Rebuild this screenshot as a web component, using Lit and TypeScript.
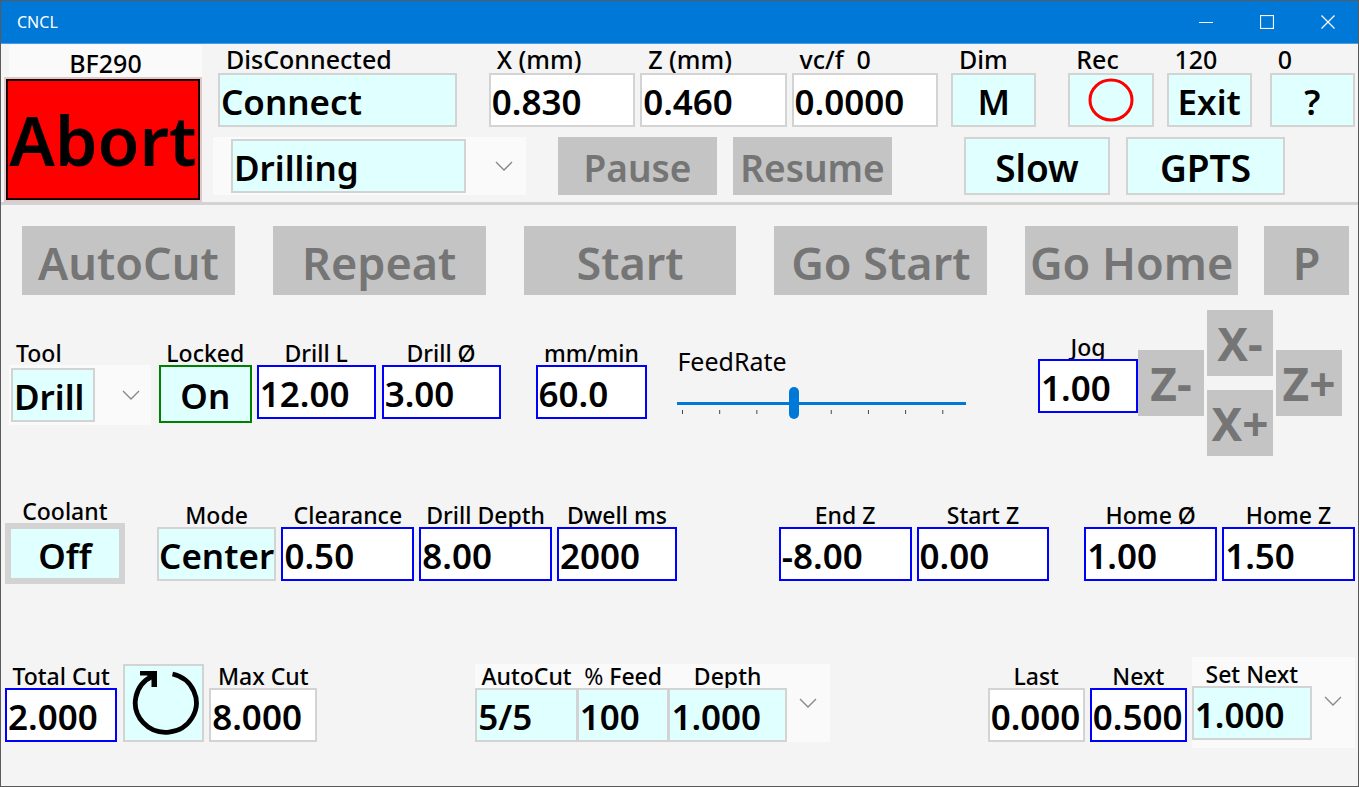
import { LitElement, html, css, nothing } from "lit";
import { customElement, property, state } from "lit/decorators.js";

const chevron = html`<svg class="chevron" viewBox="0 0 18 10" width="18" height="10" aria-hidden="true">
  <path d="M1 1 L9 9 L17 1" fill="none" stroke="#868686" stroke-width="1.3" />
</svg>`;

@customElement("app-root")
export class AppRoot extends LitElement {
  @property({ type: Number }) feedRate = 60;
  @state() private recording = false;

  static styles = css`
    :host {
      display: block;
      font-family: "Noto Sans", "Open Sans", sans-serif;
      font-weight: 500;
      color: #000;
    }
    * {
      box-sizing: border-box;
    }
    .window {
      min-height: 100vh;
      border: 1px solid #5a5a5a;
      background: #f4f4f4;
      display: flex;
      flex-direction: column;
    }
    .titlebar {
      height: 43px;
      background: #0078d7;
      border-bottom: 1px solid #4c9be0;
      color: #fff;
      display: flex;
      align-items: center;
      justify-content: space-between;
      padding-left: 16px;
    }
    .title {
      margin: 0;
      font-size: 16px;
      font-weight: 400;
    }
    .caption {
      display: flex;
    }
    .caption button {
      width: 61px;
      height: 42px;
      padding: 0;
      border: 0;
      background: none;
      display: grid;
      place-items: center;
    }

    button,
    input,
    select {
      font: inherit;
      color: inherit;
      margin: 0;
      border-radius: 0;
    }
    .box {
      display: block;
      position: relative;
      width: 100%;
      height: 54px;
      padding: 3px 1px 0;
      border: 2px solid #d3d3d3;
      background: #fff;
      font-size: 35px;
      font-weight: 600;
      text-align: left;
      appearance: none;
      outline: none;
      overflow: hidden;
      white-space: nowrap;
    }
    button.box {
      background: #e0ffff;
      text-align: center;
      padding: 0;
      line-height: 54px;
    }
    button.start {
      text-align: left;
      padding: 0 1px;
    }
    button.rec {
      line-height: 0;
    }
    .cyan {
      background: #e0ffff;
    }
    .blue {
      border-color: #0000ff;
    }
    .green {
      border-color: #008000;
      height: 58px;
    }
    button.green {
      line-height: 58px;
    }
    .thick {
      border-width: 6px;
      height: 61px;
    }
    .round {
      height: 78px;
      display: grid;
      place-items: center;
    }
    button.dead {
      display: block;
      width: 100%;
      border: 0;
      padding: 0;
      background: #c4c4c4;
      color: #757575;
      font-weight: 600;
      white-space: nowrap;
    }

    .cell {
      min-width: 0;
    }
    .label {
      display: block;
      font-size: 23px;
      line-height: 24px;
      text-align: center;
      white-space: pre;
    }
    .light {
      font-weight: 400;
    }
    .header .label {
      font-size: 25px;
      line-height: 28px;
      text-align: left;
      padding-left: 8px;
    }
    .header .model {
      background: #fafafa;
      text-align: center;
      padding: 4px 0 0;
      margin-left: 5px;
    }

    .header {
      display: flex;
      border-bottom: 3px solid #d3d3d3;
      padding: 1px 3px 0 3px;
    }
    .left {
      flex: 198 1 0;
      min-width: 0;
    }
    .right {
      flex: 1153 1 0;
      min-width: 0;
    }
    .abort-frame {
      border: 2px solid #e0c8c8;
      height: 125px;
    }
    .abort {
      display: block;
      width: 100%;
      height: 100%;
      padding: 0;
      border: 2px solid #1a0000;
      background: #ff0000;
      font-size: 68px;
      font-weight: 600;
      line-height: 100px;
      overflow: hidden;
    }
    .line {
      display: flex;
    }
    .second {
      align-items: flex-start;
      padding-top: 10px;
      padding-right: 70px;
      height: 75px;
    }
    .tall {
      height: 58px;
      line-height: 62px;
      font-size: 37px;
    }
    button.box.tall {
      line-height: 58px;
      font-size: 37px;
      height: 58px;
    }

    .combo {
      display: flex;
      align-items: center;
      background: #fafafa;
    }
    .combo .chevron {
      margin-left: 16px;
    }
    .chevron-slot {
      display: grid;
      place-items: center;
      min-width: 0;
    }
    .mode {
      padding: 2px 0 2px 18px;
    }
    .tool {
      margin-left: 4px;
      padding: 3px 0 3px 2px;
    }

    .actions {
      display: flex;
      padding: 21px 9px 0 21px;
    }
    .actions .dead {
      height: 69px;
      font-size: 45px;
      line-height: 74px;
    }
    .row {
      display: flex;
      align-items: flex-start;
      padding: 0 3px 0 4px;
    }
    .tools {
      margin-top: 15px;
      padding-right: 16px;
    }
    .drop {
      padding-top: 31px;
    }
    .jog-field {
      padding-top: 25px;
    }
    .row.middle {
      align-items: center;
    }
    .depths {
      margin-top: 43px;
    }
    .cuts {
      margin-top: 73px;
      margin-bottom: 38px;
    }
    .pad {
      display: flex;
      align-items: center;
      gap: 3px;
    }
    .pad .stack {
      display: grid;
      gap: 14px;
    }
    .pad .dead {
      width: 66px;
      height: 66px;
      font-size: 46px;
      line-height: 62px;
      font-weight: 700;
    }
    .tool-label {
      text-align: left;
      padding-left: 11px;
    }

    .feed {
      padding-top: 35px;
    }
    .feed label {
      display: block;
      font-size: 25px;
      line-height: 32px;
      padding-bottom: 10px;
      font-weight: 400;
    }
    .slider {
      display: block;
      width: 100%;
      height: 32px;
      position: relative;
      appearance: none;
      background: none;
    }
    .slider::-webkit-slider-runnable-track {
      height: 3px;
      background: #0078d7;
    }
    .slider::-webkit-slider-thumb {
      appearance: none;
      width: 10px;
      height: 32px;
      margin-top: -15px;
      border-radius: 5px;
      background: #0078d7;
    }
    .ticks {
      height: 4px;
      margin: -9px 5px 0;
      background: linear-gradient(to right, #444 1px, transparent 1px) 0 0 / 13.3333% 4px repeat-x;
    }

    .auto {
      display: flex;
      background: #fafafa;
      align-items: center;
    }
    .set-next {
      display: flex;
      background: #fafafa;
      padding: 5px 0 8px;
    }

    .g5 { margin-left: 5px; }
    .g6 { margin-left: 6px; }
    .g8 { margin-left: 8px; }
    .g11 { margin-left: 11px; }
    .g13 { margin-left: 13px; }
    .g16 { margin-left: 16px; }
    .g18 { margin-left: 18px; }
    .g26 { margin-left: 26px; }
    .g30 { margin-left: 30px; }
    .g32 { margin-left: 32px; }
    .g35 { margin-left: 35px; }
    .g38 { margin-left: 38px; }
    .g72 { margin-left: 72px; }
    .g102 { margin-left: 102px; }
    .g158 { margin-left: 158px; }
    .n1 { margin-left: -1px; }

    .w43 { flex: 43 1 0; }
    .w56 { flex: 56 1 0; }
    .w60 { flex: 60 1 0; }
    .w81 { flex: 81 1 0; }
    .w85 { flex: 85 1 0; }
    .w93 { flex: 93 1 0; }
    .w97 { flex: 97 1 0; }
    .w100 { flex: 100 1 0; }
    .w103 { flex: 103 1 0; }
    .w108 { flex: 108 1 0; }
    .w112 { flex: 112 1 0; }
    .w119 { flex: 119 1 0; }
    .w132 { flex: 132 1 0; }
    .w146 { flex: 146 1 0; }
    .w159 { flex: 159 1 0; }
    .w163 { flex: 163 1 0; }
    .w213 { flex: 213 1 0; }
    .w235 { flex: 235 1 0; }
    .w238 { flex: 238 1 0; }
    .w289 { flex: 289 1 0; }
    .w295 { flex: 295 1 0; }
    .w354 { flex: 354 1 0; }
  `;

  private field(id: string, label: unknown, value: string, cell: string, tone = "blue") {
    return html`<div class="cell ${cell}">
      <label class="label" for=${id}>${label}</label>
      <input class="box ${tone}" id=${id} .value=${value} />
    </div>`;
  }

  private push(id: string, label: string, text: unknown, cell: string, tone = "") {
    return html`<div class="cell ${cell}">
      ${label ? html`<label class="label" for=${id}>${label}</label>` : nothing}
      <button class="box ${tone}" id=${id}>${text}</button>
    </div>`;
  }

  private dead(text: string, cell: string, kind = "") {
    return html`<div class="cell ${cell}"><button class="dead ${kind}" disabled>${text}</button></div>`;
  }

  private header() {
    return html`<header class="header">
      <div class="left">
        <label class="label model" for="abort">BF290</label>
        <div class="abort-frame"><button class="abort" id="abort">Abort</button></div>
      </div>
      <div class="right">
        <div class="line">
          ${this.push("connect", "DisConnected", "Connect", "w238 g16", "start")}
          ${this.field("x", "X (mm)", "0.830", "w146 g32", "")}
          ${this.field("z", "Z (mm)", "0.460", "w146 g5", "")}
          ${this.field("vcf", "vc/f  0", "0.0000", "w146 g5", "")}
          ${this.push("dim", "Dim", "M", "w85 g13")}
          <div class="cell w85 g32">
            <label class="label" for="rec">Rec</label>
            <button class="box rec" id="rec" @click=${() => (this.recording = !this.recording)}>
              <svg width="46" height="44" viewBox="0 0 46 44" aria-hidden="true">
                <ellipse cx="23" cy="22" rx="21" ry="20" stroke="#f00" stroke-width="3" fill=${this.recording ? "#f00" : "none"} />
              </svg>
            </button>
          </div>
          ${this.push("exit", "120", "Exit", "w85 g13")}
          ${this.push("help", "0", "?", "w85 g18")}
        </div>
        <div class="line second">
          <div class="combo mode w295 g11">
            <div class="cell w235">
              <select class="box cyan" aria-label="Operation">
                <option>Drilling</option>
              </select>
            </div>
            <div class="chevron-slot w60">${chevron}</div>
          </div>
          ${this.dead("Pause", "w159 g32", "tall")}
          ${this.dead("Resume", "w159 g16", "tall")}
          ${this.push("slow", "", "Slow", "w146 g72", "tall")}
          ${this.push("gpts", "", "GPTS", "w159 g16", "tall")}
        </div>
      </div>
    </header>`;
  }

  render() {
    return html`<div class="window">
      <div class="titlebar">
        <h1 class="title">CNCL</h1>
        <div class="caption">
          <button aria-label="Minimize">
            <svg width="14" height="14" viewBox="0 0 14 14"><path d="M0 7.5H14" stroke="#fff" /></svg>
          </button>
          <button aria-label="Maximize">
            <svg width="14" height="14" viewBox="0 0 14 14"><rect x=".5" y=".5" width="13" height="13" fill="none" stroke="#fff" stroke-width="1.2" /></svg>
          </button>
          <button aria-label="Close">
            <svg width="14" height="14" viewBox="0 0 14 14"><path d="M.5 .5L13.5 13.5M13.5 .5L.5 13.5" stroke="#fff" stroke-width="1.2" /></svg>
          </button>
        </div>
      </div>
      ${this.header()}
      <main>
        <div class="actions">
          ${this.dead("AutoCut", "w213")}
          ${this.dead("Repeat", "w213 g38")}
          ${this.dead("Start", "w213 g38")}
          ${this.dead("Go Start", "w213 g38")}
          ${this.dead("Go Home", "w213 g38")}
          ${this.dead("P", "w85 g26")}
        </div>

        <div class="row tools">
          <div class="cell w146 drop">
            <label class="label tool-label" for="tool">Tool</label>
            <div class="combo tool">
              <div class="cell w85">
                <select class="box cyan" id="tool">
                  <option>Drill</option>
                </select>
              </div>
              <div class="chevron-slot w56">${chevron}</div>
            </div>
          </div>
          ${this.push("locked", "Locked", "On", "w93 g8 drop", "green")}
          ${this.field("drill-l", "Drill L", "12.00", "w119 g5 drop")}
          ${this.field("drill-d", "Drill Ø", "3.00", "w119 g6 drop")}
          ${this.field("feed", "mm/min", "60.0", "w112 g35 drop")}
          <div class="cell w289 g30 feed">
            <label for="rate">FeedRate</label>
            <input
              class="slider"
              id="rate"
              type="range"
              min="0"
              max="150"
              .value=${String(this.feedRate)}
              @input=${(e: Event) => (this.feedRate = Number((e.target as HTMLInputElement).value))}
            />
            <div class="ticks"></div>
          </div>
          ${this.field("jog", "Jog", "1.00", "w100 g72 jog-field")}
          <div class="pad">
            <button class="dead" disabled>Z-</button>
            <div class="stack">
              <button class="dead" disabled>X-</button>
              <button class="dead" disabled>X+</button>
            </div>
            <button class="dead" disabled>Z+</button>
          </div>
        </div>

        <div class="row middle depths">
          ${this.push("coolant", "Coolant", "Off", "w119", "thick")}
          ${this.push("mode", "Mode", "Center", "w119 g32")}
          ${this.field("clearance", "Clearance", "0.50", "w132 g5")}
          ${this.field("depth", "Drill Depth", "8.00", "w132 g5")}
          ${this.field("dwell", "Dwell ms", "2000", "w119 g5")}
          ${this.field("end-z", "End Z", "-8.00", "w132 g102")}
          ${this.field("start-z", "Start Z", "0.00", "w132 g5")}
          ${this.field("home-d", "Home Ø", "1.00", "w132 g35")}
          ${this.field("home-z", "Home Z", "1.50", "w132 g5")}
        </div>

        <div class="row middle cuts">
          ${this.field("total", "Total Cut", "2.000", "w112")}
          <div class="cell w81 g6">
            <button class="box round" aria-label="Reset total">
              <svg width="76" height="74" viewBox="0 0 76 74" aria-hidden="true">
                <path d="M46.500 8 A30.500 29.500 0 1 1 27 10" fill="none" stroke="#000" stroke-width="4.8" />
                <path d="M14 5H31V21H25.500V13L21 9.500H14Z" />
              </svg>
            </button>
          </div>
          ${this.field("max", "Max Cut", "8.000", "w108 g5", "")}
          <div class="auto w354 g158">
            ${this.field("auto", "AutoCut", "5/5", "w103", "cyan")}
            ${this.field("pct", html`<span class="light">%</span> Feed`, "100", "w93 n1", "cyan")}
            <div class="cell w119 n1">
              <label class="label" for="auto-depth">Depth</label>
              <select class="box cyan" id="auto-depth">
                <option>1.000</option>
              </select>
            </div>
            <div class="chevron-slot w43">${chevron}</div>
          </div>
          ${this.field("last", "Last", "0.000", "w97 g158", "")}
          ${this.field("next", "Next", "0.500", "w97 g5")}
          <div class="set-next w163 g5">
            <div class="cell w119">
              <label class="label" for="set-next">Set Next</label>
              <select class="box cyan" id="set-next">
                <option>1.000</option>
              </select>
            </div>
            <div class="chevron-slot w43">${chevron}</div>
          </div>
        </div>
      </main>
    </div>`;
  }
}
